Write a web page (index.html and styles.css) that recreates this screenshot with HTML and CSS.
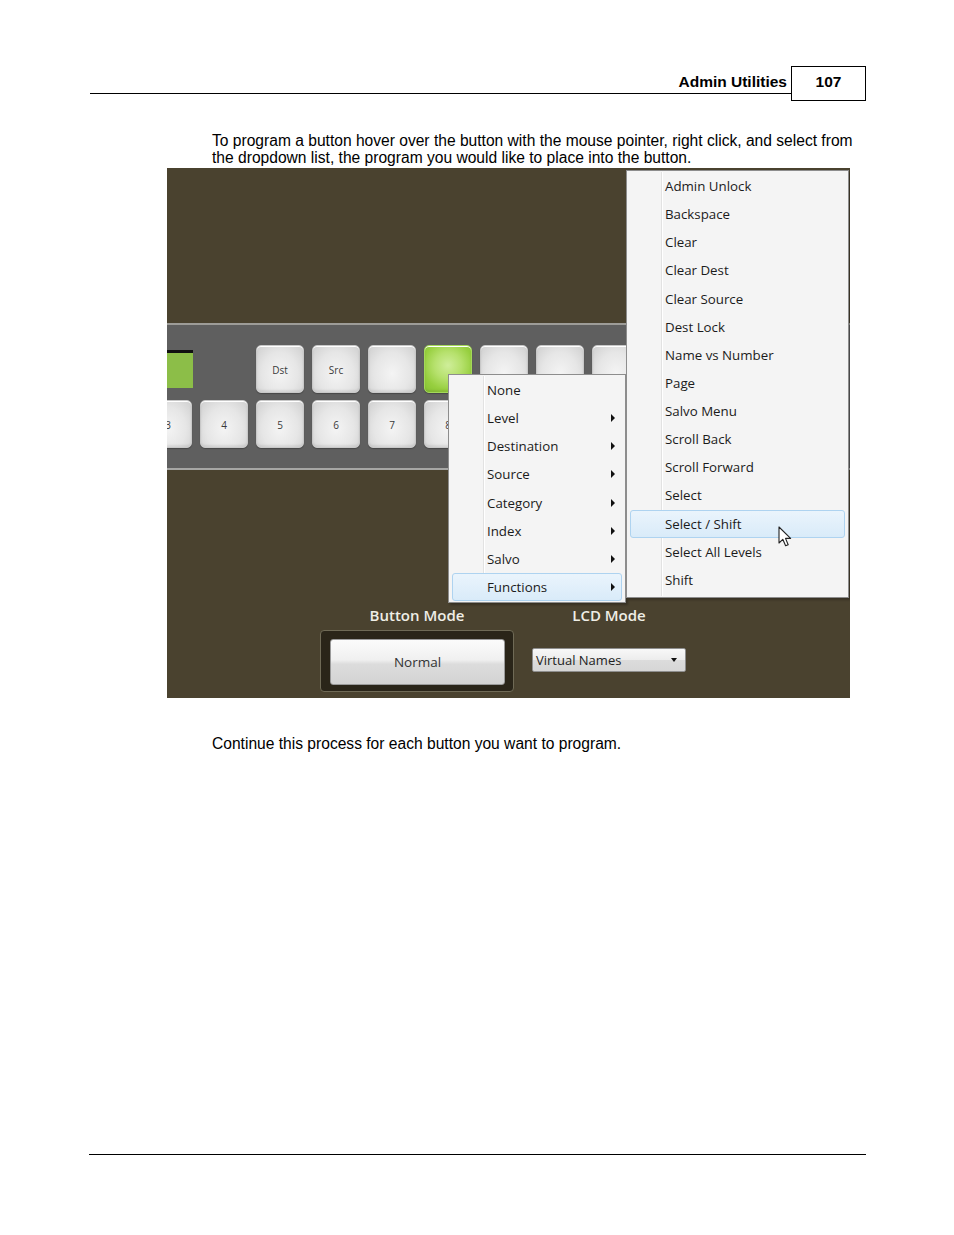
FILE: index.html
```html
<!DOCTYPE html>
<html>
<head>
<meta charset="utf-8">
<link rel="stylesheet" href="styles.css">
</head>
<body>
<div class="header">
  <div class="title">Admin Utilities</div>
  <div class="pagebox">107</div>
</div>
<p class="intro">To program a button hover over the button with the mouse pointer, right click, and select from the dropdown list, the program you would like to place into the button.</p>
<div class="shot">
  <div class="top-area"></div>
  <div class="panel">
    <div class="row row1">
      <div class="green"></div>
      <div class="key">Dst</div>
      <div class="key">Src</div>
      <div class="key"></div>
      <div class="key key-green"></div>
      <div class="key"></div>
      <div class="key"></div>
      <div class="key"></div>
    </div>
    <div class="row row2">
      <div class="key">3</div>
      <div class="key">4</div>
      <div class="key">5</div>
      <div class="key">6</div>
      <div class="key">7</div>
      <div class="key">8</div>
    </div>
  </div>
  <div class="controls">
    <div class="ctrl ctrl-button">
      <div class="ctrl-label">Button Mode</div>
      <div class="btn-well"><div class="btn-normal">Normal</div></div>
    </div>
    <div class="ctrl ctrl-lcd">
      <div class="ctrl-label">LCD Mode</div>
      <div class="combo"><span class="combo-text">Virtual Names</span><span class="combo-arrow"></span></div>
    </div>
  </div>

  <div class="menu menu1">
    <div class="mi"><span class="ml">None</span></div>
    <div class="mi"><span class="ml">Level</span><span class="arr"></span></div>
    <div class="mi"><span class="ml">Destination</span><span class="arr"></span></div>
    <div class="mi"><span class="ml">Source</span><span class="arr"></span></div>
    <div class="mi"><span class="ml">Category</span><span class="arr"></span></div>
    <div class="mi"><span class="ml">Index</span><span class="arr"></span></div>
    <div class="mi"><span class="ml">Salvo</span><span class="arr"></span></div>
    <div class="mi hl"><span class="ml">Functions</span><span class="arr"></span></div>
  </div>

  <div class="menu menu2">
    <div class="mi"><span class="ml">Admin Unlock</span></div>
    <div class="mi"><span class="ml">Backspace</span></div>
    <div class="mi"><span class="ml">Clear</span></div>
    <div class="mi"><span class="ml">Clear Dest</span></div>
    <div class="mi"><span class="ml">Clear Source</span></div>
    <div class="mi"><span class="ml">Dest Lock</span></div>
    <div class="mi"><span class="ml">Name vs Number</span></div>
    <div class="mi"><span class="ml">Page</span></div>
    <div class="mi"><span class="ml">Salvo Menu</span></div>
    <div class="mi"><span class="ml">Scroll Back</span></div>
    <div class="mi"><span class="ml">Scroll Forward</span></div>
    <div class="mi"><span class="ml">Select</span></div>
    <div class="mi hl"><span class="ml">Select / Shift</span></div>
    <div class="mi"><span class="ml">Select All Levels</span></div>
    <div class="mi"><span class="ml">Shift</span></div>
  </div>

  <svg class="cursor" width="14" height="22" viewBox="0 0 14 22">
    <path d="M1 1 L1 17 L4.8 13.3 L7.6 19.8 L10.2 18.7 L7.5 12.4 L12.6 12.4 Z" fill="#ffffff" stroke="#222222" stroke-width="1.1" stroke-linejoin="round"/>
  </svg>
</div>
<p class="caption">Continue this process for each button you want to program.</p>
<div class="footer"></div>
</body>
</html>
```

FILE: styles.css
```css
html, body {
  margin: 0;
  padding: 0;
  background: #ffffff;
}
body {
  font-family: "Liberation Sans", Arial, sans-serif;
  color: #000;
  width: 954px;
}
.header {
  display: flex;
  margin: 66px 0 0 90px;
  width: 776px;
  align-items: flex-start;
}
.title {
  flex: 1;
  border-bottom: 1px solid #000;
  text-align: right;
  font-weight: bold;
  font-size: 15.5px;
  line-height: 18px;
  padding: 7px 4px 2px 0;
  height: 18px;
}
.pagebox {
  width: 73px;
  height: 27px;
  border: 1px solid #000;
  text-align: center;
  font-weight: bold;
  font-size: 15.5px;
  line-height: 18px;
  padding-top: 6px;
}
.intro {
  margin: 32px 0 0 212px;
  width: 652px;
  font-size: 15.6px;
  line-height: 16.5px;
}
.shot {
  position: relative;
  margin: 2px 0 0 167px;
  width: 683px;
  height: 530px;
  background: #4a422f;
  overflow: hidden;
  font-family: "Open Sans", "Noto Sans", sans-serif;
}
.top-area {
  height: 155px;
}
.panel {
  background: #5f5f5f;
  border-top: 2px solid #9d9c98;
  border-bottom: 2px solid #a6a6a4;
  padding-top: 20px;
  box-sizing: border-box;
  height: 147px;
}
.row {
  display: flex;
  gap: 8px;
}
.row1 {
  height: 48px;
}
.row2 {
  margin-top: 7px;
  margin-left: -23px;
}
.green {
  width: 26px;
  height: 35px;
  margin-top: 5px;
  margin-right: 55px;
  background: #8cbe48;
  border-top: 3px solid #111;
  flex: none;
}
.key {
  flex: none;
  width: 46px;
  border: 1px solid #c8c8c8;
  border-radius: 5px;
  background: radial-gradient(ellipse at 50% 60%, #f4f4f4 0%, #e6e6e6 55%, #cfcfcf 100%);
  box-shadow: inset 0 1px 0 #ffffff, inset 0 -2px 2px rgba(0,0,0,0.08), 0 1px 1px rgba(0,0,0,0.25);
  display: flex;
  align-items: center;
  justify-content: center;
  padding-top: 2px;
  box-sizing: content-box;
  height: 44px;
  font-size: 10px;
  color: #3a3a3a;
}
.key-green {
  background: radial-gradient(circle at 50% 42%, #cfee9a 0%, #b6e16d 38%, #97cf3f 70%, #86c232 100%);
  border-color: #a4d85a;
}
.controls {
  display: flex;
  gap: 18px;
  padding: 135px 0 0 153px;
}
.ctrl {
  display: flex;
  flex-direction: column;
  align-items: center;
}
.ctrl-button {
  width: 194px;
}
.ctrl-lcd {
  width: 154px;
}
.ctrl-label {
  color: #efeee6;
  font-size: 15px;
  font-weight: 600;
  line-height: 20px;
}
.btn-well {
  margin-top: 5px;
  width: 194px;
  height: 62px;
  box-sizing: border-box;
  border: 1px solid #6f6a56;
  border-radius: 4px;
  background: #2a2519;
  padding: 8px 0 0 9px;
}
.btn-normal {
  width: 173px;
  height: 44px;
  border: 1px solid #9a9a9a;
  border-radius: 3px;
  background: linear-gradient(#fbfbfb 0%, #f0f0f0 45%, #dcdcdc 55%, #d3d3d3 100%);
  display: flex;
  align-items: center;
  justify-content: center;
  font-size: 13.5px;
  color: #333;
}
.combo {
  margin-top: 23px;
  width: 154px;
  height: 24px;
  box-sizing: border-box;
  border: 1px solid #8e8e8e;
  border-radius: 2px;
  background: linear-gradient(#f8f8f8 0%, #ececec 50%, #dcdcdc 51%, #d6d6d6 100%);
  display: flex;
  align-items: center;
  padding: 0 8px 0 3px;
}
.combo-text {
  flex: 1;
  font-size: 13px;
  color: #222;
}
.combo-arrow {
  width: 0;
  height: 0;
  border-left: 3.5px solid transparent;
  border-right: 3.5px solid transparent;
  border-top: 4px solid #111;
}
.menu {
  position: absolute;
  background: #f4f4f4;
  border: 1px solid #8d8d8d;
  box-sizing: border-box;
  padding: 1px 0;
  font-size: 13.3px;
  color: #1b1b1b;
  box-shadow: 2px 2px 2px rgba(0,0,0,0.25);
}
.menu::before {
  content: "";
  position: absolute;
  top: 1px;
  bottom: 1px;
  left: 34px;
  width: 1px;
  background: #e2e2e2;
  box-shadow: 1px 0 0 #ffffff;
}
.menu1 {
  left: 281px;
  top: 206px;
  width: 178px;
  height: 229px;
}
.menu2 {
  left: 459px;
  top: 2px;
  width: 223px;
  height: 428px;
  z-index: 2;
}
.mi {
  position: relative;
  height: 28.14px;
  margin: 0 3px;
  display: flex;
  align-items: center;
  padding-left: 34px;
  padding-right: 6px;
  box-sizing: border-box;
  border: 1px solid transparent;
  border-radius: 3px;
  z-index: 1;
}
.ml {
  flex: 1;
}
.arr {
  width: 0;
  height: 0;
  border-top: 4px solid transparent;
  border-bottom: 4px solid transparent;
  border-left: 4px solid #111;
}
.hl {
  background: linear-gradient(#eaf4fc, #d9ebf9);
  border-color: #aed3f0;
}
.cursor {
  position: absolute;
  left: 611px;
  top: 358px;
  z-index: 3;
}
.caption {
  margin: 38px 0 0 212px;
  font-size: 15.6px;
  line-height: 16.5px;
}
.footer {
  margin: 401px 0 0 89px;
  width: 777px;
  height: 0;
  border-top: 1px solid #000;
}
```
